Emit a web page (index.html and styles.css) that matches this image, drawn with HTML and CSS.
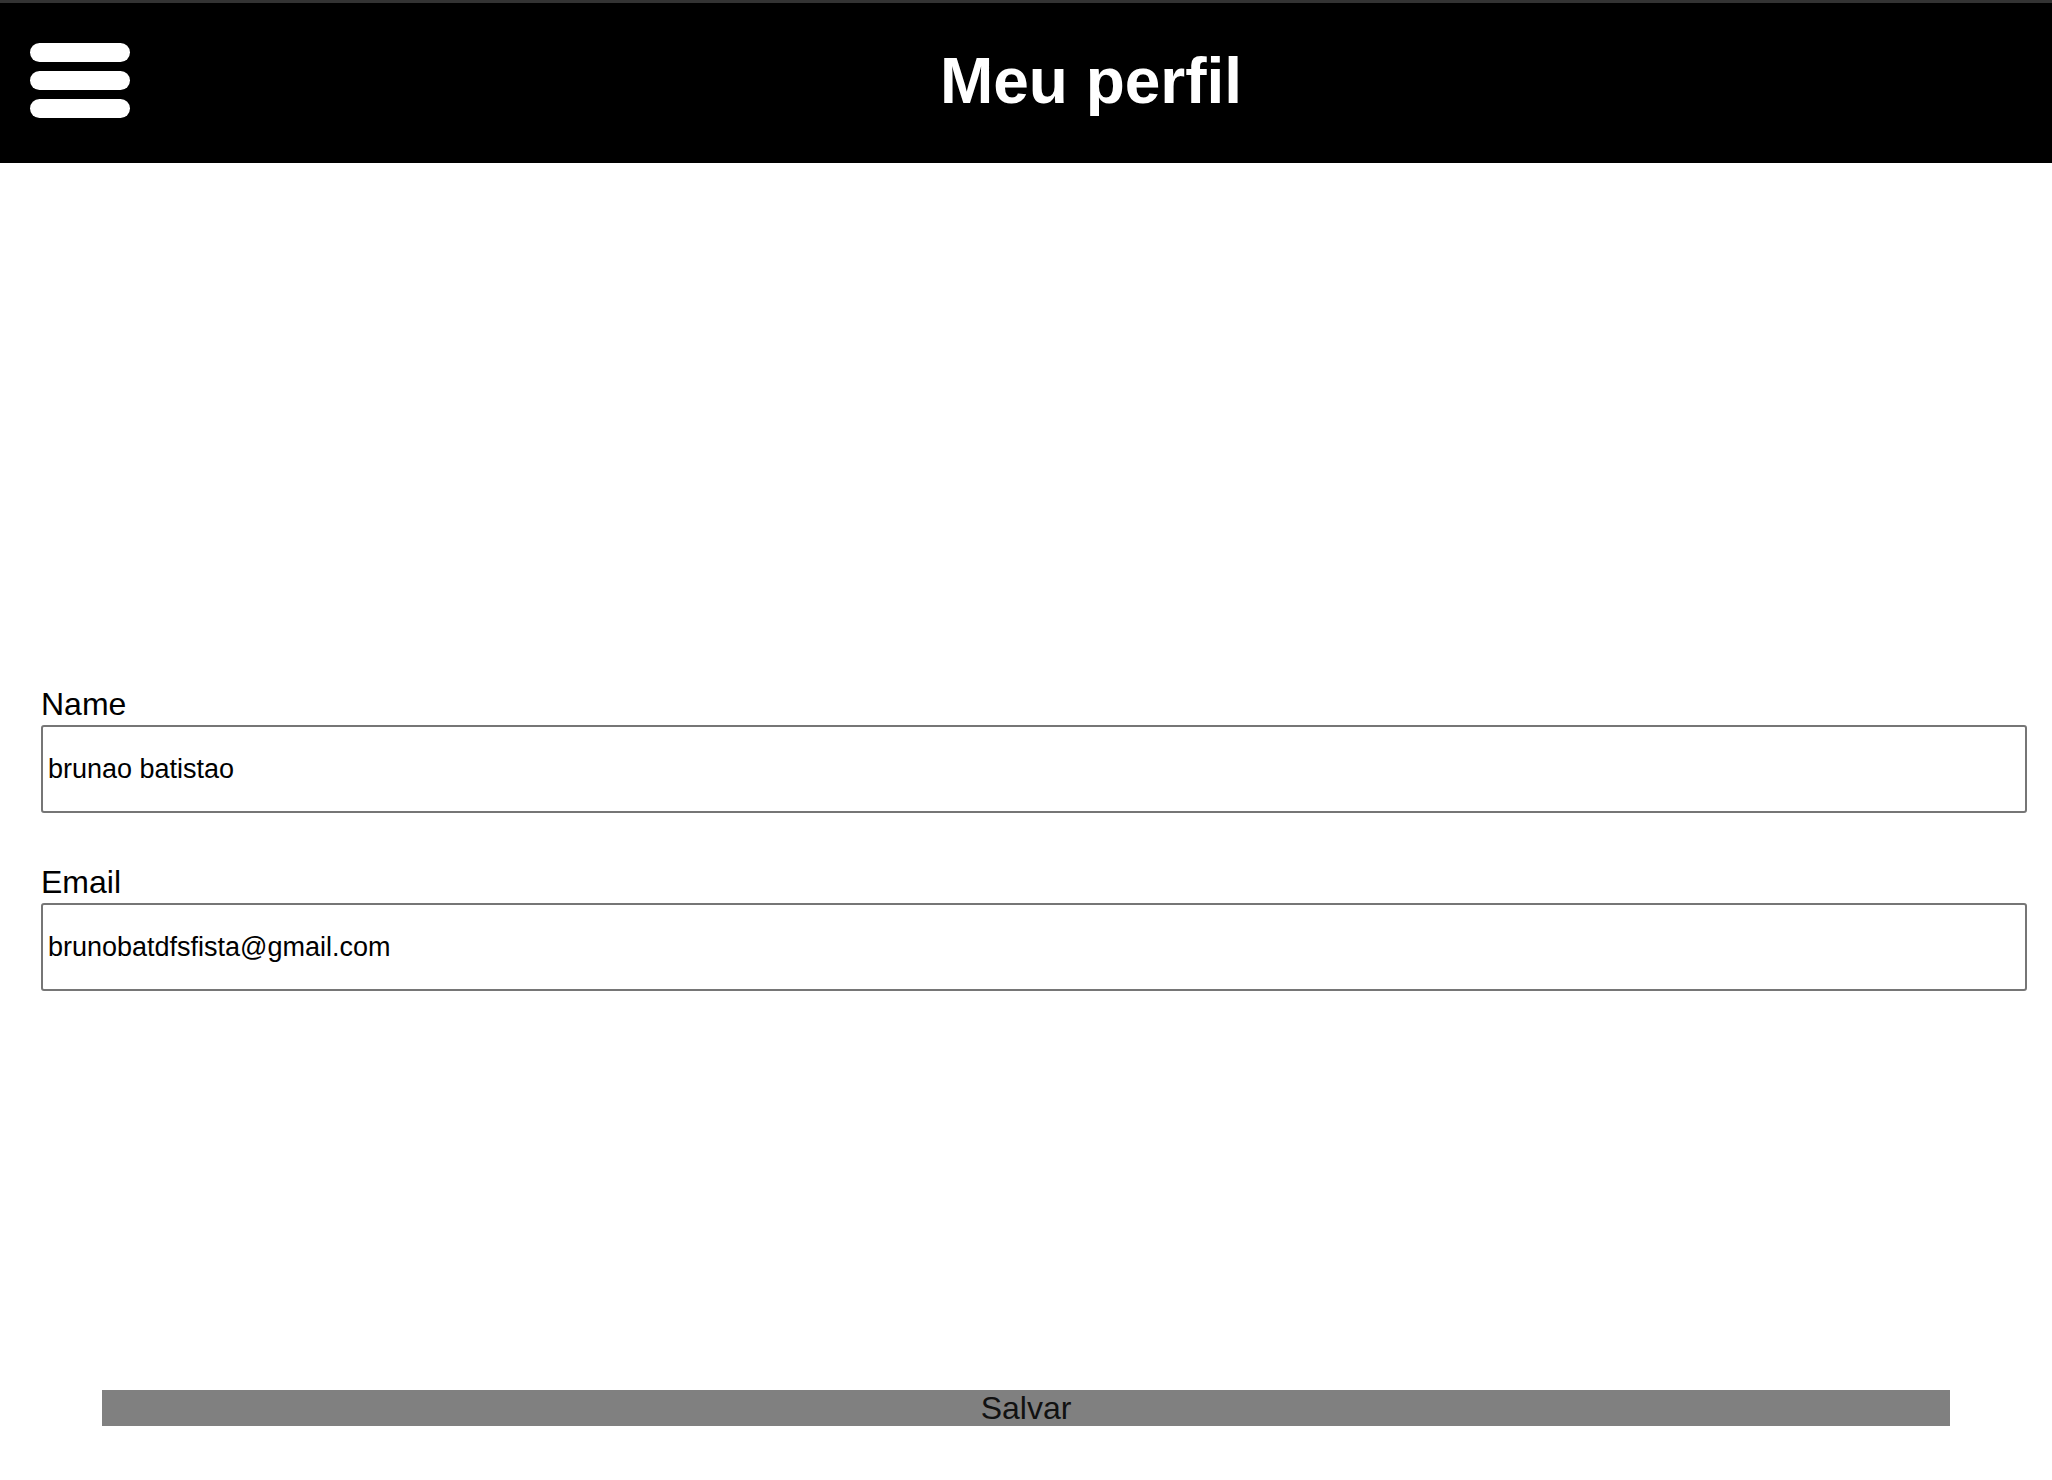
FILE: index.html
```html
<!DOCTYPE html>
<html lang="pt">
<head>
<meta charset="utf-8">
<title>Meu perfil</title>
<link rel="stylesheet" href="styles.css">
</head>
<body>
<header class="topbar">
  <div class="menu" aria-label="menu">
    <span class="bar"></span>
    <span class="bar"></span>
    <span class="bar"></span>
  </div>
  <h1 class="title">Meu perfil</h1>
</header>
<main class="content">
  <form class="form">
    <div class="field">
      <label class="label" for="name">Name</label>
      <input class="input" id="name" type="text" value="brunao batistao">
    </div>
    <div class="field field-email">
      <label class="label" for="email">Email</label>
      <input class="input" id="email" type="email" value="brunobatdfsfista@gmail.com">
    </div>
  </form>
  <div class="actions">
    <button class="save" type="button">Salvar</button>
  </div>
</main>
</body>
</html>
```
FILE: styles.css
```css
html, body {
  margin: 0;
  padding: 0;
  background: #ffffff;
  font-family: "Liberation Sans", Arial, sans-serif;
}

.topbar {
  display: flex;
  align-items: center;
  height: 160px;
  background: #000000;
  border-top: 3px solid #333333;
}

.menu {
  display: flex;
  flex-direction: column;
  gap: 9px;
  margin-left: 30px;
  margin-bottom: 6px;
  width: 100px;
}

.bar {
  display: block;
  width: 100px;
  height: 19px;
  border-radius: 10px;
  background: #ffffff;
}

.title {
  flex: 1;
  margin: 0 0 4px 0;
  text-align: center;
  color: #ffffff;
  font-size: 64px;
  font-weight: bold;
}

.content {
  padding: 524px 25px 0 41px;
}

.form {
  display: flex;
  flex-direction: column;
  gap: 52px;
}

.field {
  display: flex;
  flex-direction: column;
  gap: 3px;
}

.label {
  font-size: 32px;
  color: #000000;
  line-height: 35px;
}

.input {
  box-sizing: border-box;
  width: 100%;
  height: 88px;
  margin: 0;
  padding: 0 5px;
  border: 2px solid #767676;
  border-radius: 3px;
  font-family: "Liberation Sans", Arial, sans-serif;
  font-size: 27px;
  color: #000000;
  background: #ffffff;
}

.actions {
  display: flex;
  justify-content: center;
  margin-top: 399px;
  margin-left: -41px;
  margin-right: -25px;
  padding: 0 102px;
}

.save {
  width: 100%;
  height: 36px;
  margin: 0;
  padding: 0;
  border: none;
  border-radius: 0;
  background: #808080;
  color: #111111;
  font-family: "Liberation Sans", Arial, sans-serif;
  font-size: 32px;
  line-height: 36px;
}
```
